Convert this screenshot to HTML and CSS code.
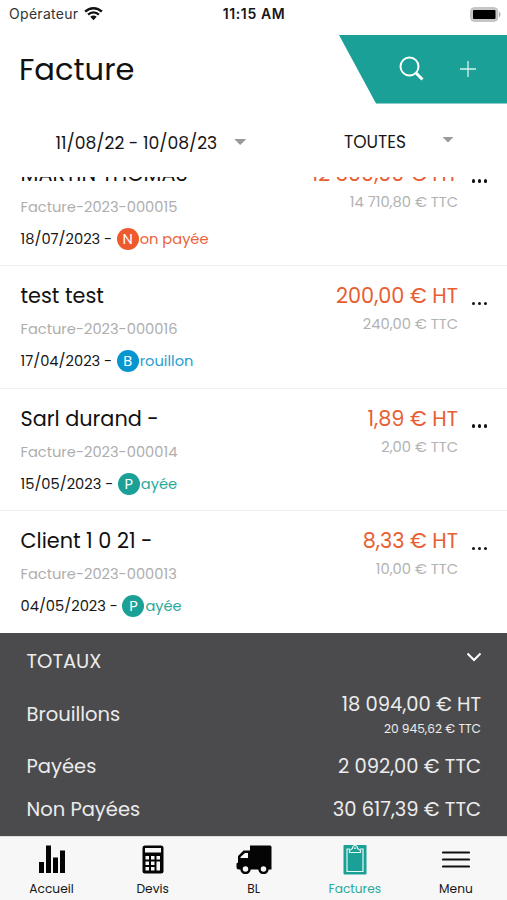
FILE: index.html
```html
<!DOCTYPE html>
<html lang="fr">
<head>
<meta charset="utf-8">
<title>Facture</title>
<link rel="stylesheet" href="styles.css">
</head>
<body>
<div class="status">
  <div class="carrier"><span class="operator">Opérateur</span>
    <svg class="wifi" width="19" height="15" viewBox="0 0 20 15"><path d="M1.200 5.600C6.200.7 13.800.7 18.800 5.600M4.300 8.700c3.300-3.100 8.100-3.100 11.400 0" fill="none" stroke="#111" stroke-width="2.500"/><path d="M6.600 11c2-1.800 4.800-1.800 6.800 0L10 14.500z" fill="#111"/></svg>
  </div>
  <div class="clock">11:15 AM</div>
  <svg class="battery" width="31" height="15" viewBox="0 0 31 15"><rect x=".7" y=".7" width="27" height="13.600" rx="3.500" fill="#c8c8c8" stroke="#bbb" stroke-width="1"/><path d="M29 4.500q3 3 0 6z" fill="#aaa"/><rect x="3" y="3" width="22.500" height="9" rx="1" fill="#000"/></svg>
</div>
<header class="header">
  <h1 class="title">Facture</h1>
  <div class="actions">
    <svg width="26" height="26" viewBox="0 0 26 26"><circle cx="10.500" cy="10.500" r="9" fill="none" stroke="#fff" stroke-width="2"/><path d="M17 17l6.500 6.500" stroke="#fff" stroke-width="3"/></svg>
    <svg width="16" height="16" viewBox="0 0 16 16"><path d="M8 0v16M0 8h16" stroke="#d5f3ee" stroke-width="1.300"/></svg>
  </div>
</header>
<div class="filters">
  <div class="filter period"><span class="range">11/08/22 - 10/08/23</span><i class="caret"></i></div>
  <div class="filter kind"><span>TOUTES</span><i class="caret"></i></div>
</div>
<main class="list">
  <article class="row first">
    <div class="info"><div class="name">MARTIN THOMAS</div><div class="ref">Facture-2023-000015</div>
      <div class="state unpaid"><span class="date">18/07/2023 -</span><b class="dot">N</b><span>on payée</span></div></div>
    <div class="amount"><div class="ht">12 300,00 € HT</div><div class="ttc">14 710,80 € TTC</div></div>
    <div class="more"><i></i><i></i><i></i></div>
  </article>
  <article class="row">
    <div class="info"><div class="name">test test</div><div class="ref">Facture-2023-000016</div>
      <div class="state draft"><span class="date">17/04/2023 -</span><b class="dot">B</b><span>rouillon</span></div></div>
    <div class="amount"><div class="ht">200,00 € HT</div><div class="ttc">240,00 € TTC</div></div>
    <div class="more"><i></i><i></i><i></i></div>
  </article>
  <article class="row">
    <div class="info"><div class="name">Sarl durand -</div><div class="ref">Facture-2023-000014</div>
      <div class="state paid"><span class="date">15/05/2023 -</span><b class="dot">P</b><span>ayée</span></div></div>
    <div class="amount"><div class="ht">1,89 € HT</div><div class="ttc">2,00 € TTC</div></div>
    <div class="more"><i></i><i></i><i></i></div>
  </article>
  <article class="row">
    <div class="info"><div class="name">Client 1 0 21 -</div><div class="ref">Facture-2023-000013</div>
      <div class="state paid"><span class="date">04/05/2023 -</span><b class="dot">P</b><span>ayée</span></div></div>
    <div class="amount"><div class="ht">8,33 € HT</div><div class="ttc">10,00 € TTC</div></div>
    <div class="more"><i></i><i></i><i></i></div>
  </article>
</main>
<section class="totals">
  <div class="line head"><span>TOTAUX</span><svg width="16" height="10" viewBox="0 0 16 10"><path d="M1.500 1.500L8 8l6.500-6.500" fill="none" stroke="#fff" stroke-width="2"/></svg></div>
  <div class="line drafts"><span>Brouillons</span><div class="pair"><span>18 094,00 € HT</span><small>20 945,62 € TTC</small></div></div>
  <div class="line settled"><span>Payées</span><span>2 092,00 € TTC</span></div>
  <div class="line due"><span>Non Payées</span><span>30 617,39 € TTC</span></div>
</section>
<nav class="tabs">
  <a class="tab"><svg width="28" height="30" viewBox="0 0 28 30"><path d="M1 18h5v11H1zM8 1.500h5V29H8zM15 13.500h5V29h-5zM22 6.500h5V29h-5z" fill="#050505"/></svg><span>Accueil</span></a>
  <a class="tab"><svg width="22" height="30" viewBox="0 0 22 30"><rect x=".5" y="1.500" width="21" height="28" rx="2.500" fill="#050505"/><path d="M3 4h16v4.500H3zM3.500 12h3.500v3.500H3.500zM9 12h3.500v3.500H9zM14.500 12H18v3.500h-3.500zM3.500 17.500h3.500V21H3.500zM9 17.500h3.500V21H9zM3.500 23h3.500v3.500H3.500zM9 23h3.500v3.500H9zM14.500 17.500H18v9h-3.500z" fill="#f7f7f7"/></svg><span>Devis</span></a>
  <a class="tab"><svg width="36" height="30" viewBox="0 0 36 30"><path d="M14 1.500h20q1.500 0 1.500 1.500v22.500H3q-2.500 0-2.500-2.500v-3.500l1.500-1V12l5.500-5.500H14z" fill="#050505"/><path d="M4.500 14v-1l4.500-4h3v5z" fill="#f7f7f7"/><circle cx="9.500" cy="25" r="4" fill="#f7f7f7" stroke="#050505" stroke-width="2.500"/><circle cx="27.500" cy="25" r="4" fill="#f7f7f7" stroke="#050505" stroke-width="2.500"/></svg><span>BL</span></a>
  <a class="tab active"><svg width="24" height="31" viewBox="0 0 24 31"><rect x=".5" y="1" width="23" height="29.500" rx="1" fill="#1aa096"/><path d="M7 5H4V27.500H20V5h-3M6.500 8.500V6.500L9.500 4.500C9.500.5 14.500.5 14.500 4.500L17.500 6.500V8.500z" fill="none" stroke="#e5f7f4" stroke-width="1.200"/><circle cx="12" cy="4.200" r=".9" fill="#e5f7f4"/></svg><span>Factures</span></a>
  <a class="tab"><svg width="28" height="30" viewBox="0 0 28 30"><path d="M1 8.500h26M1 15.500h26M1 22.500h26" stroke="#111" stroke-width="2.200" stroke-linecap="round"/></svg><span>Menu</span></a>
</nav>
</body>
</html>
```

FILE: styles.css
```css
* { box-sizing: border-box; }
body { margin: 0; width: 507px; height: 900px; overflow: hidden; background: #fff; color: #161616; font-family: Poppins, Inter, sans-serif; display: flex; flex-direction: column; white-space: nowrap; }
span { display: inline-block; }
.status { height: 35px; padding: 0 6px 7px 9px; display: grid; grid-template-columns: 1fr auto 1fr; align-items: center; font-family: Inter, sans-serif; font-size: 14px; line-height: 18px; }
.carrier { display: flex; align-items: center; gap: 5px; }
.operator { width: 70px; color: #333; letter-spacing: .3px; }
.wifi { margin-top: -2px; }
.clock { font-weight: 600; letter-spacing: .6px; margin-left: -2px; }
.battery { justify-self: end; }
.header { height: 69px; display: flex; justify-content: space-between; }
.title { margin: 0; padding-left: 19px; font-size: 30.5px; line-height: 70px; font-weight: 400; color: #111; }
.actions { width: 168px; height: 69px; background: #1aa096; clip-path: polygon(0 0, 100% 0, 100% 68.5px, 37px 68.5px); display: flex; align-items: center; justify-content: flex-end; gap: 35px; padding: 0 31px 2px 0; }
.filters { height: 73px; display: flex; justify-content: space-between; padding: 28.5px 53px 0 55.5px; font-size: 17px; line-height: 20px; }
.filter { display: flex; }
.range { font-size: 17.2px; }
.period { gap: 17px; }
.kind { gap: 36px; line-height: 18px; }
.caret { width: 12px; height: 6px; margin-top: 6.5px; background: #999; clip-path: polygon(0 0, 100% 0, 50% 100%); }
.kind .caret { margin-top: 4px; }
.list { height: 456px; overflow: hidden; }
.row { height: 122.5px; border-bottom: 1.5px solid #f1f1f1; padding: 16px 18.5px 0 20.5px; display: flex; }
.row:last-child { border-bottom: 0; }
.first { margin-top: -33.5px; }
.info { flex: 1; }
.name { font-size: 20.8px; line-height: 28px; color: #111; }
.ref { font-size: 14.65px; line-height: 20px; margin-top: 9px; color: #aeaeae; }
.state { display: flex; align-items: center; height: 24px; margin-top: 10px; font-size: 14.65px; line-height: 20px; }
.date { margin-right: 4.5px; color: #161616; }
.dot { width: 22px; height: 22px; border-radius: 50%; color: #fff; font-weight: 400; text-align: center; line-height: 22px; margin-right: 1px; }
.unpaid { color: #ec6238; }
.unpaid .dot { background: #ec5a2d; }
.draft { color: #2a9dd0; }
.draft .dot { background: #0796cf; }
.paid { color: #2ba99b; }
.paid .dot { background: #1aa096; }
.amount { text-align: right; margin-right: 13.5px; }
.ht { font-size: 20.8px; line-height: 28px; color: #e85e33; }
.ttc { font-size: 14.7px; line-height: 20px; margin-top: 4px; color: #b2b2b2; }
.more { display: flex; gap: 2.3px; padding-top: 19.5px; width: 17px; }
.more i { width: 3.8px; height: 3.8px; border-radius: 50%; background: #111; flex: none; }
.totals { height: 203px; background: #4b4b4d; color: #ececec; padding: 14px 26px 0 26.5px; font-size: 19.5px; line-height: 30px; }
.line { display: flex; justify-content: space-between; align-items: center; }
.head { height: 30px; }
.head svg { margin: 0 -1px 10px 0; }
.drafts { height: 54px; margin-top: 11px; }
.pair { display: flex; flex-direction: column; align-items: flex-end; line-height: 28px; }
.pair small { font-size: 12.2px; line-height: 20px; }
.settled { height: 30px; margin-top: 10px; }
.due { height: 30px; margin-top: 13px; }
.tabs { height: 64px; background: #f7f7f7; border-top: 1px solid #ddd; display: grid; grid-template-columns: repeat(5, 101.1px); color: #161616; font-size: 12.2px; line-height: 18px; padding-left: 1px; }
.tab { display: flex; flex-direction: column; align-items: center; padding-top: 7px; }
.tab span { margin-top: auto; padding-bottom: 2px; }
.active { color: #2ba99b; }
```
